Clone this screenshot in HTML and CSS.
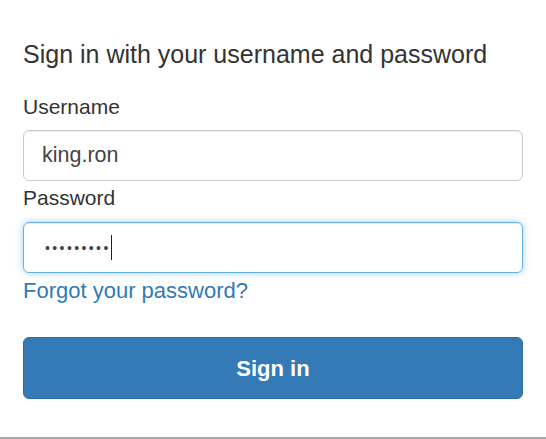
FILE: index.html
```html
<!DOCTYPE html>
<html>
<head>
<meta charset="utf-8">
<link rel="stylesheet" href="styles.css">
</head>
<body>
<div class="page">
  <form class="signin">
    <h1 class="title">Sign in with your username and password</h1>
    <label class="label first" for="u">Username</label>
    <div class="input">king.ron</div>
    <label class="label" for="p">Password</label>
    <div class="input focused"><span class="dots">•••••••••</span><span class="caret"></span></div>
    <a class="forgot" href="#">Forgot your password?</a>
    <button class="btn" type="button">Sign in</button>
  </form>
  <div class="bottom-line"></div>
</div>
</body>
</html>
```
FILE: styles.css
```css
html, body {
  margin: 0;
  padding: 0;
  background: #fff;
}
.page {
  width: 546px;
  height: 439px;
  display: flex;
  flex-direction: column;
  font-family: "Liberation Sans", Arial, sans-serif;
  color: #333;
}
.signin {
  flex: 1;
  display: flex;
  flex-direction: column;
  padding: 39px 23px 0 23px;
}
.title {
  margin: 0;
  font-size: 25px;
  font-weight: normal;
  line-height: 30px;
  color: #333;
}
.label {
  margin-top: 5px;
  font-size: 21px;
  line-height: 24px;
}
.label.first {
  margin-top: 26px;
}
.input {
  margin-top: 12px;
  height: 51px;
  box-sizing: border-box;
  border: 1px solid #ccc;
  border-radius: 6px;
  box-shadow: inset 0 1px 1px rgba(0,0,0,0.075);
  padding: 0 18px;
  display: flex;
  align-items: center;
  font-size: 21.5px;
  color: #444;
}
.label.first + .input {
  margin-top: 11px;
}
.input.focused {
  border-color: #66afe9;
  box-shadow: inset 0 1px 1px rgba(0,0,0,0.075), 0 0 7px rgba(102,175,233,0.6);
  padding-left: 21px;
}
.dots {
  font-size: 14px;
  letter-spacing: 2.4px;
  color: #444;
}
.caret {
  width: 1px;
  height: 25px;
  margin-left: 0;
  background: #222;
}
.forgot {
  margin-top: 6px;
  font-size: 22px;
  line-height: 24px;
  color: #337ab7;
  text-decoration: none;
  align-self: flex-start;
}
.btn {
  margin-top: 34px;
  height: 62px;
  padding: 2px 0 0 0;
  border: 1px solid #2e6da4;
  border-radius: 6px;
  background: #337ab7;
  color: #fff;
  font-family: "Liberation Sans", Arial, sans-serif;
  font-weight: bold;
  font-size: 22px;
}
.bottom-line {
  height: 2px;
  background: #a8a8a8;
}
```
